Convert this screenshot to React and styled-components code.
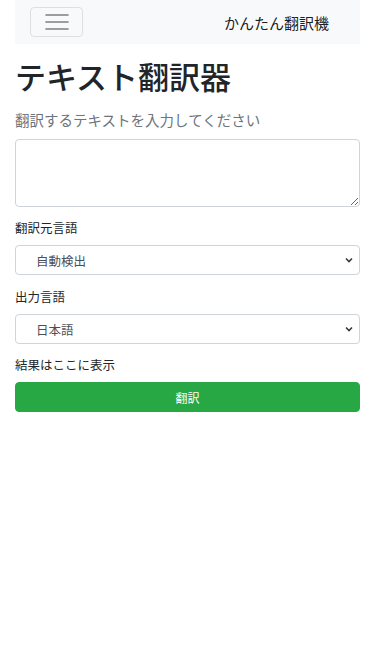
import React from "react";
import styled, { createGlobalStyle } from "styled-components";

const GlobalStyle = createGlobalStyle`
  * { box-sizing: border-box; }
  body {
    margin: 0;
    background: #fff;
    color: #212529;
    font-family: "Noto Sans CJK JP", "Noto Sans", sans-serif;
  }
`;

const Container = styled.div`
  width: 100%;
  padding: 0 15px;
`;

const Navbar = styled.nav`
  display: flex;
  align-items: center;
  justify-content: space-between;
  height: 44px;
  padding: 0 31px 0 15px;
  background-color: #f8f9fa;
`;

const Toggler = styled.button`
  width: 53px;
  height: 30px;
  padding: 0;
  display: flex;
  align-items: center;
  justify-content: center;
  background: transparent;
  border: 1px solid rgba(0, 0, 0, 0.1);
  border-radius: 4px;
`;

const Brand = styled.a`
  font-size: 15px;
  line-height: 1;
  color: rgba(0, 0, 0, 0.9);
  text-decoration: none;
`;

const Title = styled.h1`
  margin: 8px 0 5px;
  font-size: 31px;
  line-height: 48px;
  font-weight: 500;
  color: #212529;
`;

const Lead = styled.p`
  margin: 0 0 4px;
  font-size: 14.5px;
  line-height: 30px;
  color: #6c757d;
`;

const TextArea = styled.textarea`
  display: block;
  width: 100%;
  height: 68px;
  padding: 6px 12px;
  border: 1px solid #ced4da;
  border-radius: 4px;
  font: inherit;
  resize: vertical;
`;

const Group = styled.div`
  margin-top: ${(p) => p.$top || 9}px;
`;

const Label = styled.label`
  display: block;
  margin-bottom: 5px;
  font-size: 12.5px;
  line-height: 24px;
  color: #212529;
`;

const SelectWrap = styled.div`
  position: relative;
`;

const Select = styled.select`
  display: block;
  width: 100%;
  height: 30px;
  padding: 0 28px 0 16px;
  text-indent: 4px;
  border: 1px solid #ced4da;
  border-radius: 4px;
  background: #fff;
  font-family: inherit;
  font-size: 12.5px;
  color: #495057;
  appearance: none;
  -webkit-appearance: none;
`;

const Chevron = styled.svg`
  position: absolute;
  right: 6px;
  top: 11px;
  pointer-events: none;
`;

const SubmitButton = styled.button`
  display: block;
  width: 100%;
  height: 30px;
  border: 1px solid #28a745;
  border-radius: 4px;
  background-color: #28a745;
  color: #fff;
  font-family: inherit;
  font-size: 12px;
`;

function Hamburger() {
  return (
    <svg width="24" height="20" viewBox="0 0 24 20">
      <g stroke="#7f7f7f" strokeWidth="1.6" strokeLinecap="round">
        <line x1="1" y1="3" x2="23" y2="3" />
        <line x1="1" y1="10" x2="23" y2="10" />
        <line x1="1" y1="17" x2="23" y2="17" />
      </g>
    </svg>
  );
}

function Dropdown({ options }) {
  return (
    <SelectWrap>
      <Select>
        {options.map((o) => (
          <option key={o}>{o}</option>
        ))}
      </Select>
      <Chevron width="10" height="8" viewBox="0 0 10 8">
        <path d="M2 2.5 L5 5.5 L8 2.5" fill="none" stroke="#343a40" strokeWidth="1.6" />
      </Chevron>
    </SelectWrap>
  );
}

export default function App() {
  return (
    <>
      <GlobalStyle />
      <Container>
        <Navbar>
          <Toggler aria-label="menu">
            <Hamburger />
          </Toggler>
          <Brand href="#">かんたん翻訳機</Brand>
        </Navbar>

        <Title>テキスト翻訳器</Title>
        <Lead>翻訳するテキストを入力してください</Lead>
        <TextArea />

        <Group>
          <Label>翻訳元言語</Label>
          <Dropdown options={["自動検出", "日本語", "英語"]} />
        </Group>

        <Group $top={10}>
          <Label>出力言語</Label>
          <Dropdown options={["日本語", "英語", "中国語"]} />
        </Group>

        <Group>
          <Label>結果はここに表示</Label>
          <SubmitButton>翻訳</SubmitButton>
        </Group>
      </Container>
    </>
  );
}
